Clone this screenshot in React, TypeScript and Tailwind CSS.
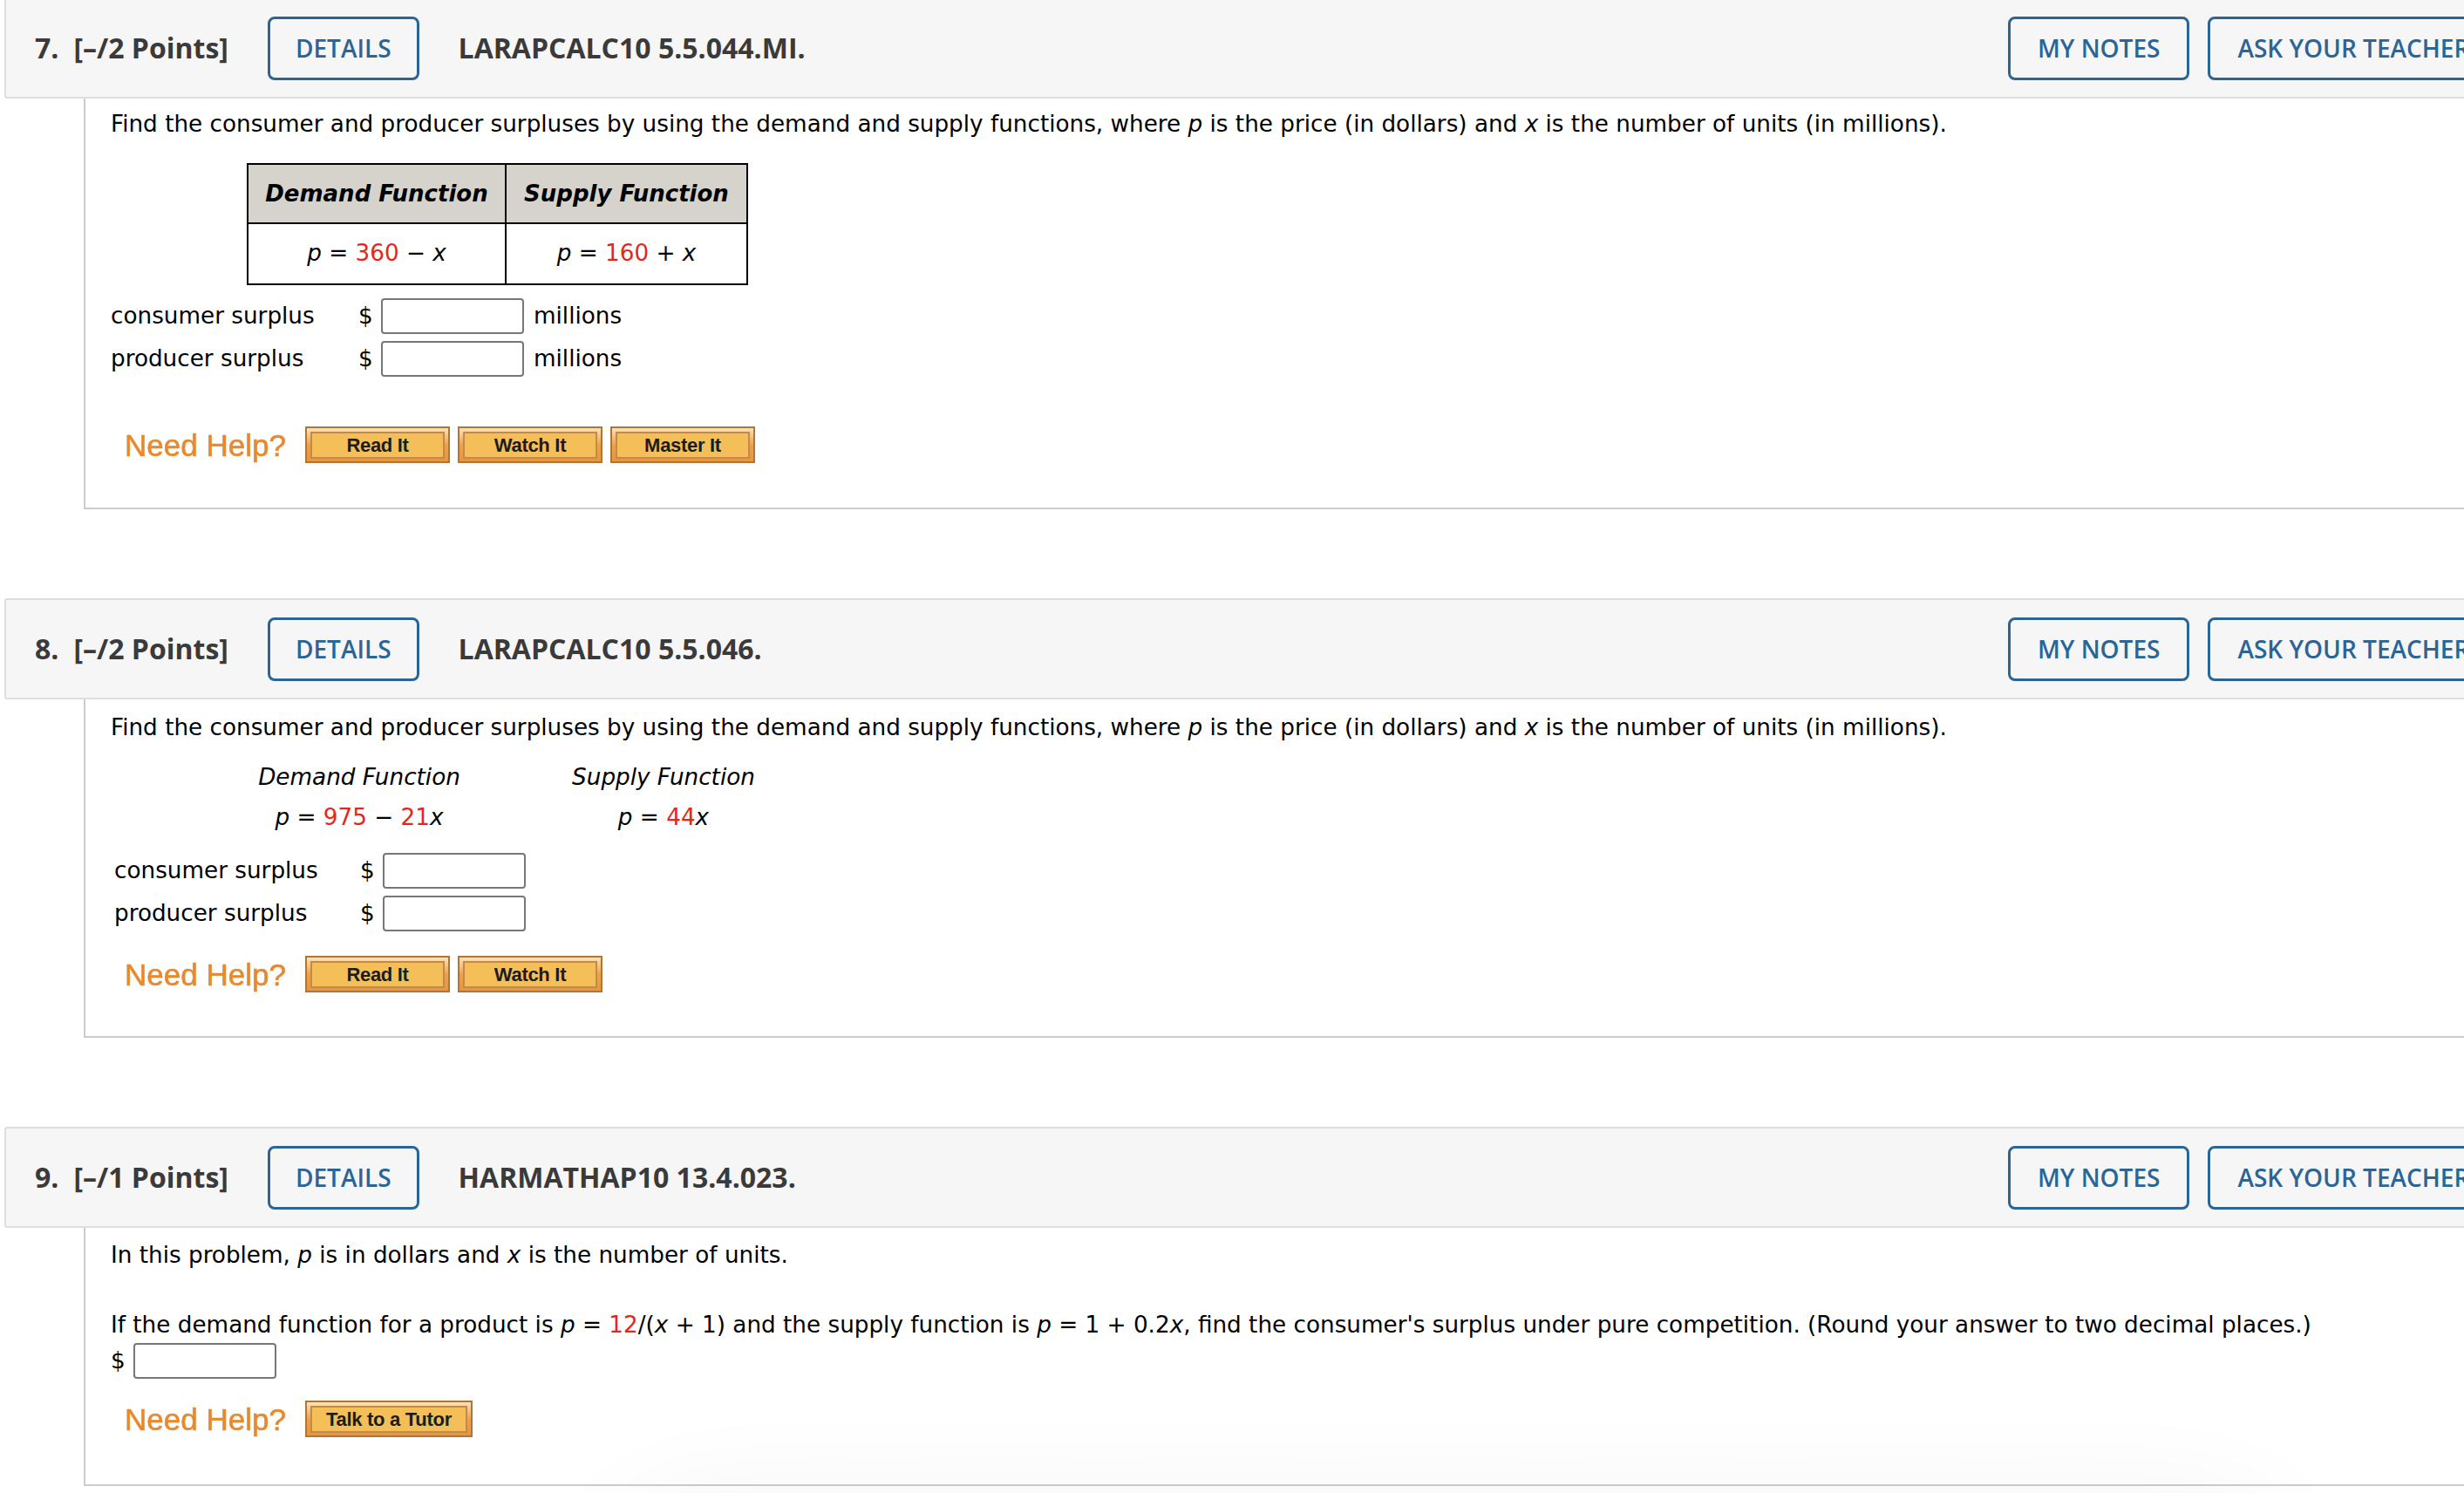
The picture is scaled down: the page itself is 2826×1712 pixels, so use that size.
import React from 'react';

const HeaderBtn: React.FC<{ children: React.ReactNode; px?: string }> = ({ children, px = 'px-[31px]' }) => (
    <div className={`h-[73px] ${px} flex items-center shrink-0 border-[3px] border-[#2b6598] rounded-[8px] text-[#2b6598] text-[28px] font-semibold whitespace-nowrap`}>
        {children}
    </div>
);

const QHeader: React.FC<{ num: number; pts: number; code: string }> = ({ num, pts, code }) => (
    <div className="h-[116px] ml-[5px] w-[3000px] flex items-center bg-[#f6f6f6] border-2 border-[#dedede] rounded-[3px] pl-[33px] font-['Open_Sans',sans-serif]">
        <div className="w-[2263px] shrink-0 flex items-center">
            <span className="text-[32px] font-bold text-[#3a3a3a]">{num}.</span>
            <span className="ml-[17px] text-[32px] font-bold text-[#3a3a3a]">[–/{pts} Points]</span>
            <div className="ml-[45px]">
                <HeaderBtn px="px-[29px]">DETAILS</HeaderBtn>
            </div>
            <span className="ml-[45px] text-[32px] font-bold text-[#3a3a3a] whitespace-nowrap">{code}</span>
        </div>
        <HeaderBtn>MY NOTES</HeaderBtn>
        <div className="ml-[21px]">
            <HeaderBtn>ASK YOUR TEACHER</HeaderBtn>
        </div>
    </div>
);

const HelpBtn: React.FC<{ label: string; w: string }> = ({ label, w }) => (
    <div className={`${w} h-[42px] shrink-0 border-2 border-[#b07636] bg-linear-to-b from-[#fde2b6] via-[#eea14a] to-[#e9953c] pt-[4px] pb-[3px] px-[4px]`}>
        <div className="h-full border-2 border-[#c28b4d] bg-[#f4be58] flex items-center justify-center text-[22px] leading-none font-bold text-[#1c1c1c] font-['Liberation_Sans',Arial,sans-serif] tracking-[-0.3px]">
            {label}
        </div>
    </div>
);

const NeedHelp: React.FC<{ buttons: { label: string; w: string }[] }> = ({ buttons }) => (
    <div className="flex items-center h-[42px] ml-[16px]">
        <span className="text-[35px] leading-none text-[#e8892e] font-['Liberation_Sans',Arial,sans-serif] w-[207px] shrink-0 [-webkit-text-stroke:0.6px_#e8892e] blur-[0.4px]">
            Need Help?
        </span>
        <div className="flex gap-[9px]">
            {buttons.map((b) => (
                <HelpBtn key={b.label} label={b.label} w={b.w} />
            ))}
        </div>
    </div>
);

const Box: React.FC<{ w?: string }> = ({ w = 'w-[164px]' }) => (
    <input type="text" className={`${w} h-[41px] border-2 border-[#777] rounded-[4px] bg-white shrink-0 outline-none`} />
);

const Red: React.FC<{ children: React.ReactNode }> = ({ children }) => <span className="text-[#e5261c]">{children}</span>;
const I: React.FC<{ children: React.ReactNode }> = ({ children }) => <i>{children}</i>;

const SurplusRow: React.FC<{ label: string; unit?: boolean; labelW: string; gapCls: string }> = ({ label, unit, labelW, gapCls }) => (
    <div className={`flex items-center h-[41px] ${gapCls}`}>
        <span className={`${labelW} shrink-0`}>{label}</span>
        <span className="w-[26px] shrink-0">$</span>
        <Box />
        {unit && <span className="ml-[11px]">millions</span>}
    </div>
);

const Content: React.FC<{ children: React.ReactNode; cls: string }> = ({ children, cls }) => (
    <div className={`ml-[96px] w-[3000px] border-l-2 border-b-2 border-[#cccccc] pl-[29px] text-[26.25px] text-black font-['DejaVu_Sans',Verdana,sans-serif] ${cls}`}>
        {children}
    </div>
);

const sentence =
    'Find the consumer and producer surpluses by using the demand and supply functions, where ';

export default function App() {
    return (
        <div className="relative w-[2826px] h-[1712px] overflow-hidden bg-white">
            <div className="flex flex-col mt-[-3px]">
                {/* 7 */}
                <QHeader num={7} pts={2} code="LARAPCALC10 5.5.044.MI." />
                <Content cls="pb-[51px]">
                    <div className="h-[40px] mt-[10px] flex items-center whitespace-nowrap">
                        <span>
                            {sentence}
                            <I>p</I> is the price (in dollars) and <I>x</I> is the number of units (in millions).
                        </span>
                    </div>
                    <div className="ml-[156px] mt-[24px] w-[575px] border-2 border-black grid grid-cols-[296px_275px]">
                        <div className="h-[68px] bg-[#d6d3cc] border-r-2 border-b-2 border-black flex items-center justify-center font-bold italic text-[26px]">
                            Demand Function
                        </div>
                        <div className="h-[68px] bg-[#d6d3cc] border-b-2 border-black flex items-center justify-center font-bold italic text-[26px]">
                            Supply Function
                        </div>
                        <div className="h-[68px] border-r-2 border-black flex items-center justify-center">
                            <span>
                                <I>p</I> = <Red>360</Red> − <I>x</I>
                            </span>
                        </div>
                        <div className="h-[68px] flex items-center justify-center">
                            <span>
                                <I>p</I> = <Red>160</Red> + <I>x</I>
                            </span>
                        </div>
                    </div>
                    <SurplusRow label="consumer surplus" unit labelW="w-[284px]" gapCls="mt-[15px]" />
                    <SurplusRow label="producer surplus" unit labelW="w-[284px]" gapCls="mt-[8px]" />
                    <div className="mt-[57px]">
                        <NeedHelp
                            buttons={[
                                { label: 'Read It', w: 'w-[166px]' },
                                { label: 'Watch It', w: 'w-[166px]' },
                                { label: 'Master It', w: 'w-[166px]' },
                            ]}
                        />
                    </div>
                </Content>

                {/* 8 */}
                <div className="mt-[102px]">
                    <QHeader num={8} pts={2} code="LARAPCALC10 5.5.046." />
                </div>
                <Content cls="pb-[50px]">
                    <div className="h-[40px] mt-[13px] flex items-center whitespace-nowrap">
                        <span>
                            {sentence}
                            <I>p</I> is the price (in dollars) and <I>x</I> is the number of units (in millions).
                        </span>
                    </div>
                    <div className="mt-[17px] ml-[135px] grid grid-cols-[300px_398px] italic">
                        <div className="h-[40px] flex items-center justify-center">Demand Function</div>
                        <div className="h-[40px] flex items-center justify-center">Supply Function</div>
                        <div className="h-[40px] mt-[6px] flex items-center justify-center not-italic">
                            <span>
                                <I>p</I> = <Red>975</Red> − <Red>21</Red>
                                <I>x</I>
                            </span>
                        </div>
                        <div className="h-[40px] mt-[6px] flex items-center justify-center not-italic">
                            <span>
                                <I>p</I> = <Red>44</Red>
                                <I>x</I>
                            </span>
                        </div>
                    </div>
                    <div className="ml-[4px]">
                        <SurplusRow label="consumer surplus" labelW="w-[282px]" gapCls="mt-[20px]" />
                        <SurplusRow label="producer surplus" labelW="w-[282px]" gapCls="mt-[8px]" />
                    </div>
                    <div className="mt-[28px]">
                        <NeedHelp
                            buttons={[
                                { label: 'Read It', w: 'w-[166px]' },
                                { label: 'Watch It', w: 'w-[166px]' },
                            ]}
                        />
                    </div>
                </Content>

                {/* 9 */}
                <div className="mt-[102px]">
                    <QHeader num={9} pts={1} code="HARMATHAP10 13.4.023." />
                </div>
                <Content cls="pb-[54px]">
                    <div className="h-[40px] mt-[12px] flex items-center whitespace-nowrap">
                        <span>
                            In this problem, <I>p</I> is in dollars and <I>x</I> is the number of units.
                        </span>
                    </div>
                    <div className="h-[40px] mt-[40px] flex items-center whitespace-nowrap">
                        <span>
                            If the demand function for a product is <I>p</I> = <Red>12</Red>/(<I>x</I> + 1) and the supply function
                            is <I>p</I> = 1 + 0.2<I>x</I>, find the consumer's surplus under pure competition. (Round your answer to
                            two decimal places.)
                        </span>
                    </div>
                    <div className="flex items-center h-[41px]">
                        <span className="w-[26px] shrink-0">$</span>
                        <Box />
                    </div>
                    <div className="mt-[25px]">
                        <NeedHelp buttons={[{ label: 'Talk to a Tutor', w: 'w-[192px]' }]} />
                    </div>
                </Content>
            </div>

            {/* faint shadow of a floating panel below the fold */}
            <div className="absolute left-[760px] right-[260px] top-[1790px] h-[200px] rounded-[40px] shadow-[0_0_140px_50px_rgba(0,0,0,0.07)]" />
        </div>
    );
}
